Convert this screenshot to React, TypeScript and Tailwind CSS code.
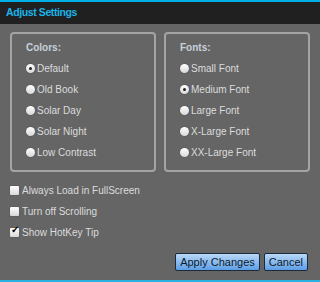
import React from 'react'

const colors = ['Default', 'Old Book', 'Solar Day', 'Solar Night', 'Low Contrast']
const fonts = ['Small Font', 'Medium Font', 'Large Font', 'X-Large Font', 'XX-Large Font']
const checks = [
  { label: 'Always Load in FullScreen', on: false },
  { label: 'Turn off Scrolling', on: false },
  { label: 'Show HotKey Tip', on: true },
]

function Radio({ label, on }: { label: string; on: boolean }) {
  return (
    <div className="flex items-center h-[21px]">
      <span className="w-[9px] h-[9px] rounded-full bg-gradient-to-b from-white to-[#d8d8d8] shadow-[0_0_1px_rgba(0,0,0,0.6)] flex items-center justify-center mr-[2px]">
        {on && <span className="w-[3px] h-[3px] rounded-full bg-[#222]" />}
      </span>
      <span>{label}</span>
    </div>
  )
}

function Group({ title, items, selected }: { title: string; items: string[]; selected: number }) {
  return (
    <div className="w-[146px] h-[140px] border-2 border-[#a4a4a4] rounded-[4px] pl-[14px] pt-[6px]">
      <div className="font-bold text-[#c8d0dc] mb-[3px]">{title}</div>
      {items.map((item, i) => (
        <Radio key={item} label={item} on={i === selected} />
      ))}
    </div>
  )
}

export default function App() {
  return (
    <div
      className="w-[320px] h-[282px] bg-[#656565] flex flex-col text-[10px] text-[#dcdcdc]"
      style={{ fontFamily: '"Liberation Sans", Arial, sans-serif' }}
    >
      <div className="h-[2px] bg-[#00b0e6]" />
      <div className="h-[22px] bg-[#202020] flex items-center px-[6px] text-[10.5px] tracking-[-0.4px] font-bold text-[#19b4e8]">
        Adjust Settings
      </div>
      <div className="flex-1 flex flex-col px-[10px] pt-[8px]">
        <div className="flex gap-[8px]">
          <Group title="Colors:" items={colors} selected={0} />
          <Group title="Fonts:" items={fonts} selected={1} />
        </div>
        <div className="pt-[8px]">
          {checks.map((c) => (
            <div key={c.label} className="flex items-center h-[21px]">
              <span className="relative w-[9px] h-[9px] rounded-[1px] bg-gradient-to-b from-white to-[#d8d8d8] shadow-[0_0_1px_rgba(0,0,0,0.6)] mr-[3px]">
                {c.on && (
                  <span className="absolute -top-[3px] left-[1px] text-[10px] leading-none text-black font-bold">✓</span>
                )}
              </span>
              <span>{c.label}</span>
            </div>
          ))}
        </div>
        <div className="flex justify-end gap-[4px] mt-[10px] pr-[2px]">
          <button className="h-[18px] px-[4px] border border-[#1d2a3a] rounded-[2px] bg-gradient-to-b from-[#b8d8f8] to-[#5c9ee6] text-[#0d1a2a] text-[11px]">
            Apply Changes
          </button>
          <button className="h-[18px] px-[4px] border border-[#1d2a3a] rounded-[2px] bg-gradient-to-b from-[#b8d8f8] to-[#5c9ee6] text-[#0d1a2a] text-[11px]">
            Cancel
          </button>
        </div>
      </div>
      <div className="h-[2px] bg-[#29b2e0]" />
    </div>
  )
}
